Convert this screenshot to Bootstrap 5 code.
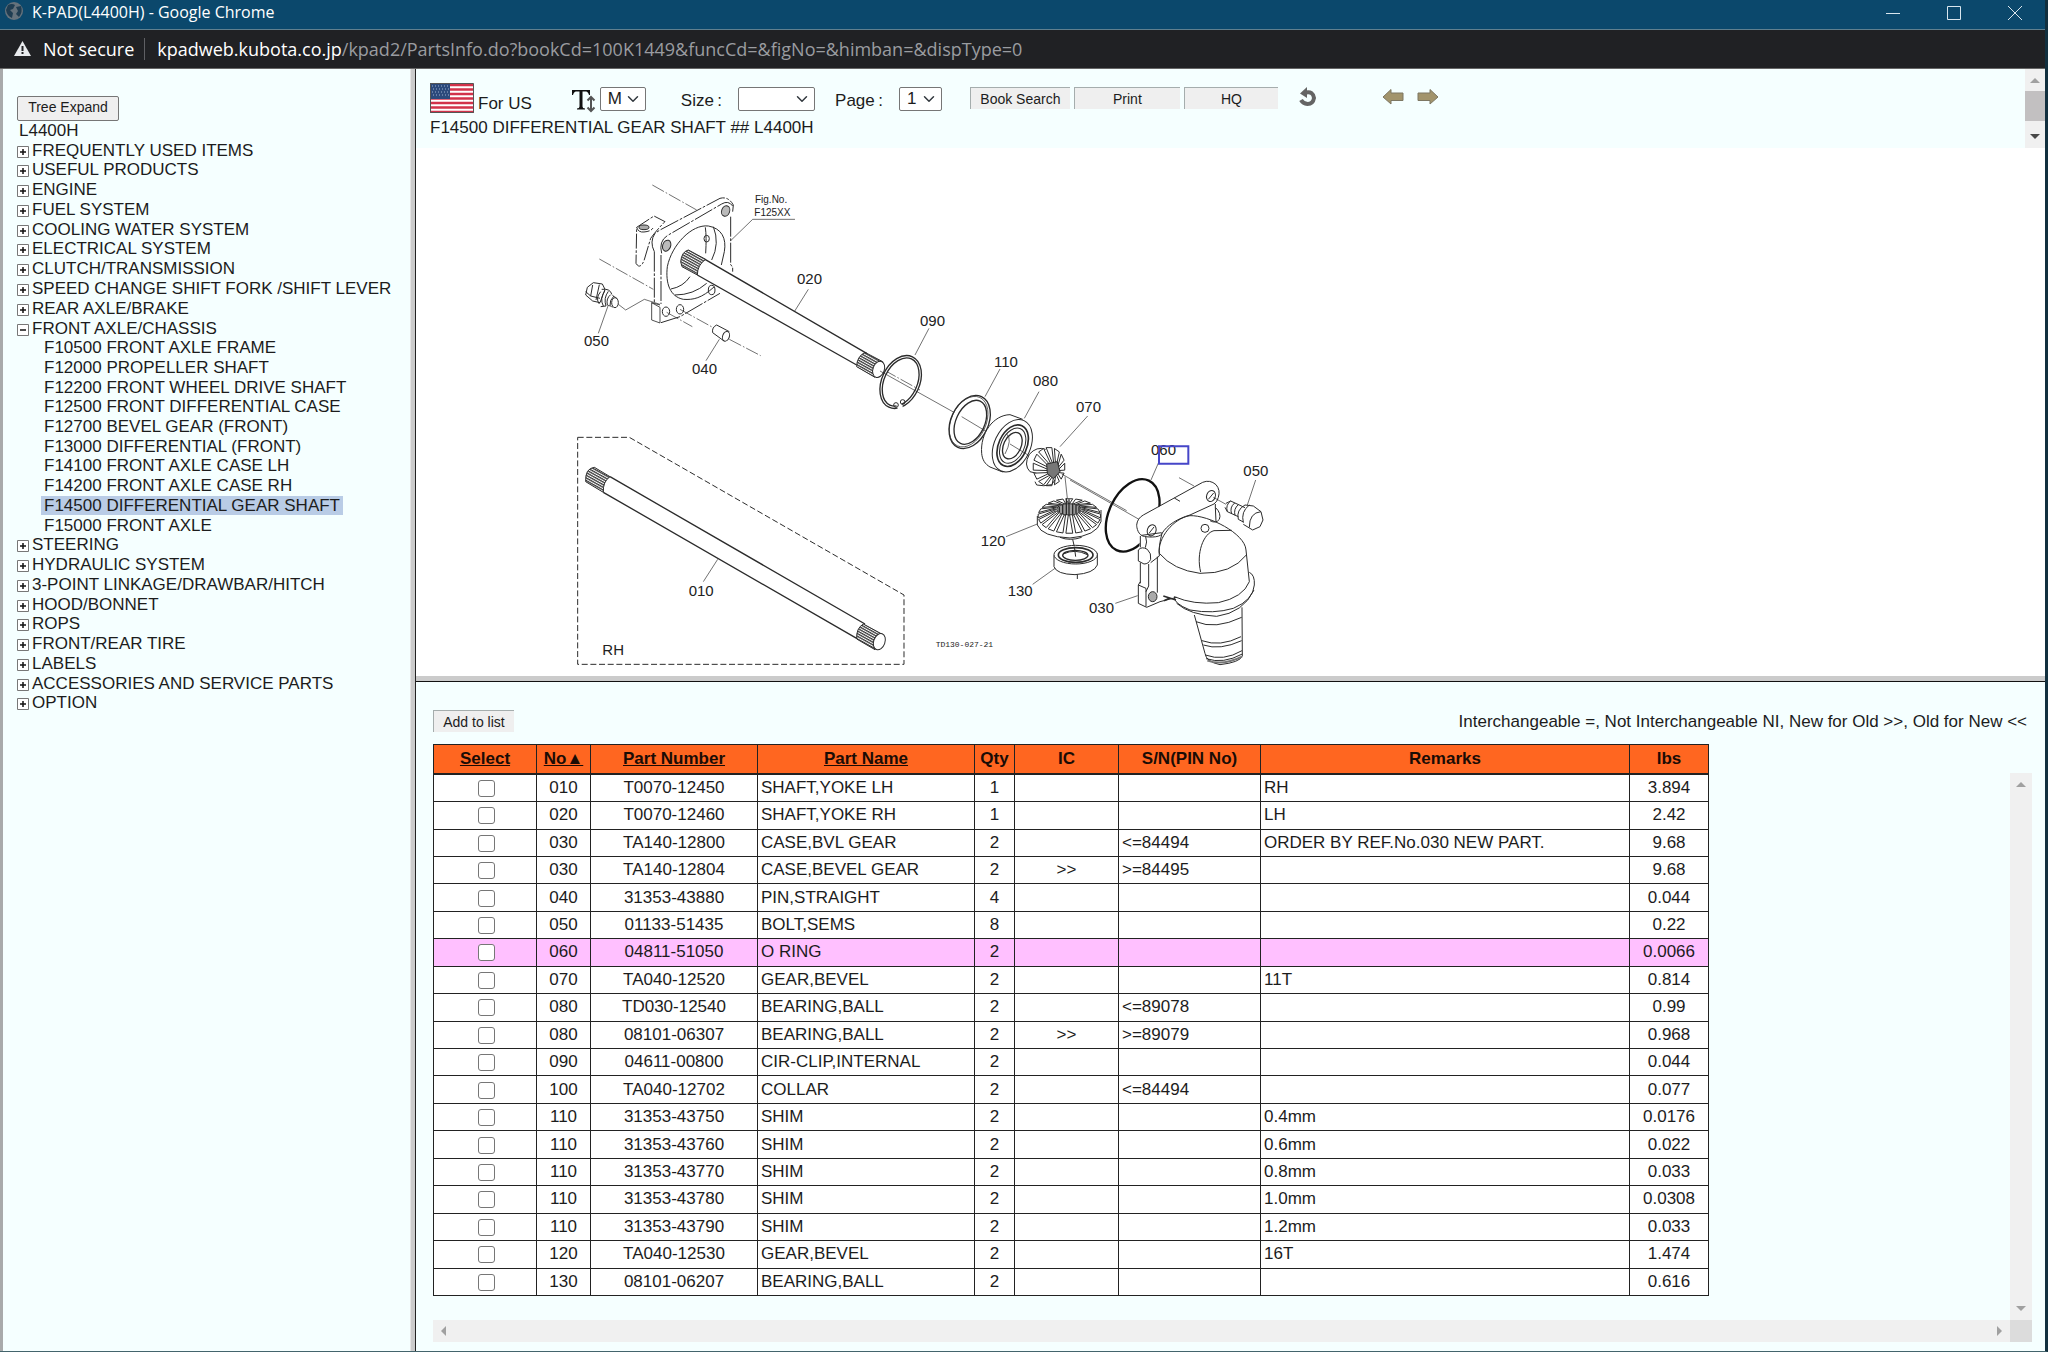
<!DOCTYPE html>
<html lang="en">
<head>
<meta charset="utf-8">
<meta name="viewport" content="width=device-width, initial-scale=1">
<title>K-PAD(L4400H)</title>
<link rel="stylesheet" href="https://cdn.jsdelivr.net/npm/bootstrap@5.3.0/dist/css/bootstrap.min.css">
<script src="https://cdn.jsdelivr.net/npm/bootstrap@5.3.0/dist/js/bootstrap.bundle.min.js"></script>
<style>
body{font-family:"Liberation Sans",Arial,sans-serif;font-size:17px;line-height:20px;color:#1c1c1c;background:#f5ffff;border-right:3px solid #12303f;border-bottom:1px solid #43646c}
.titlebar{height:30px;background:#0b486c;border-bottom:1px solid #60808f;color:#fff;font:16px/24px "Open Sans","Noto Sans",sans-serif;padding-left:4px}
.winbtn{width:61px;height:26px;padding:0;border:0;background:none;line-height:0}
.addressbar{height:39px;background:#202124;border-bottom:1px solid #666;color:#fff;font:18px/36px "Open Sans","Noto Sans",sans-serif;padding-left:14px}
.addressbar .urlhost{color:#fff;text-decoration:none}
.addressbar .urlpath{color:#9a9ca0}
.addressbar .notsecure{margin:0 10px 0 12px}
.vbar{width:1px;height:22px;background:#5f6064;margin-right:12px}
.treepane{width:410px;border-left:3px solid #a8aaab;padding:27px 0 0 14px}
.splitter{width:6px;background:#cbcbcb;border-right:1px solid #222;border-left:1px solid #e4e4e4}
.hsplitter{height:6px;background:#cbcbcb;border-bottom:1px solid #111}
.keybtn{font-size:14px;line-height:20px;padding:0 0 3px;color:#1c1c1c;background:#efefef;border:1px solid #767676;border-radius:2px;width:102px;height:25px}
.flatbtn{font-size:14px;line-height:20px;height:22px;padding:0;color:#1c1c1c;background:#efefef;border:0;border-top:1px solid #a5adad;border-left:1px solid #a5adad}
.tree{display:grid;grid-auto-rows:1fr;height:592px;padding:0;margin:0;list-style:none;justify-items:start}
.tree ul,.tree .branch{display:contents;list-style:none}
.tree a{color:#1c1c1c;text-decoration:none;white-space:nowrap;display:flex;align-items:center;line-height:19px}
.tree svg{width:12px;height:12px;margin:3px 3px 0 0}
.tree .leaf{margin-left:24px;padding:0 3px}
.tree .rootitem{padding-left:2px}
.tree .chosen{background:#b9cce6}
.toolbar{height:79px;padding-left:14px}
.toolrow{height:46px;padding-top:14px}
.toolrow .form-select{font-size:17px;line-height:20px;height:24px;padding:0 0 0 7px;border:1px solid #767676;border-radius:2px;background-color:#fff;background-position:right 5px center;background-size:14px 12px;color:#1c1c1c}
.w-m{width:46px}.w-size{width:77px}.w-page{width:43px}
.scrollgutter{width:20px;background:#f0f0f0}
.thumbpart{height:30px;background:#c2c0c1}
.canvas{background:#fff;height:528px}
.lowerpane{padding:28px 13px 9px 17px}
.listhead{height:34px}
.listhead .legendtext{padding:2px 5px 0 0}
.parts{width:1275px;height:552px;table-layout:fixed;border-collapse:collapse;background:#fff}
.parts th,.parts td{border:1px solid #222;padding:0 2px;line-height:20px;text-align:center;white-space:nowrap}
.parts th{background:#ff6620;height:29px;border-bottom-width:2px}
.parts th,.parts th a{color:#1a0c05}
.parts td:nth-child(4),.parts td:nth-child(7),.parts td:nth-child(8){text-align:left;padding-left:3px}
.parts .picked td{background:#ffc0ff}
.parts input{appearance:none;display:block;width:17px;height:17px;margin:1px auto 0;border:1px solid #767676;border-radius:3px;background:#fff}
.parts td:first-child{padding-left:4px}
.track{background:#f0f0f0}
.vtrack{width:22px;margin-top:29px}
.htrack{height:22px}
.corner{width:22px;background:#dcdcdc}
.textsize{margin:3px 1px 0 39px}
.gapbig{margin-left:35px}
.gapmid{margin-left:20px}
.gapsel{margin-left:16px}
.actions{margin-left:28px;gap:4px}
.b1{width:100px}.b2{width:106px}.b3{width:94px}.b4{width:81px}
.reloadlink{margin-left:20px}
.prevlink{margin-left:64px}
.nextlink{margin-left:13px}
.prevlink,.nextlink{padding-top:1px}
.flagtext{margin:11px 0 0 4px}
.figtitle{padding-top:3px}
svg{flex-shrink:0}
.drawing text{font-family:"Liberation Sans",Arial,sans-serif;font-size:45px;fill:#222;stroke:none}
.drawing .tiny{font-size:30px}
.drawing .mono{font-family:"Liberation Mono",monospace;font-size:24px}
</style>
</head>
<body class="vh-100 d-flex flex-column overflow-hidden">
<header>
<div class="titlebar d-flex align-items-start">
<svg width="20" height="24" viewBox="0 0 20 24" class="me-2"><circle cx="10" cy="11" r="9" fill="#65727c"/><path d="M4 5Q8 3 11 5L9 9 6 10 9 13 8 18Q3 16 2 10ZM12 7 17 6Q19 12 15 17L12 14 14 11Z" fill="#1f3d52"/></svg>
<span>K-PAD(L4400H) - Google Chrome</span>
<div class="ms-auto d-flex">
<button class="winbtn" aria-label="Minimize"><svg width="16" height="16" stroke="#d9e6ee" fill="none"><path d="M1 8.500H15"/></svg></button>
<button class="winbtn" aria-label="Maximize"><svg width="16" height="16" stroke="#d9e6ee" fill="none"><path d="M1.500 1.500H14.500V14.500H1.500Z"/></svg></button>
<button class="winbtn" aria-label="Close"><svg width="16" height="16" stroke="#d9e6ee" fill="none"><path d="M1 1 15 15M15 1 1 15"/></svg></button>
</div>
</div>
<div class="addressbar d-flex align-items-center">
<svg width="17" height="16" viewBox="0 0 17 16"><path d="M8.500 0 17 15H0Z" fill="#e8eaed"/><path d="M8.500 5V10M8.500 11V13" stroke="#202124" stroke-width="2"/></svg>
<span class="notsecure">Not secure</span><span class="vbar"></span>
<a class="urlhost" href="#">kpadweb.kubota.co.jp<span class="urlpath">/kpad2/PartsInfo.do?bookCd=100K1449&amp;funcCd=&amp;figNo=&amp;himban=&amp;dispType=0</span></a>
</div>
</header>

<svg width="0" height="0" class="position-absolute"><defs>
<symbol id="plus" viewBox="0 0 12 12"><path d="M.5.5H11.500V11.500H.5Z" fill="#fff" stroke="#777"/><path d="M3 6H9M6 3V9" stroke="#111" stroke-width="1.500"/></symbol>
<symbol id="minus" viewBox="0 0 12 12"><path d="M.5.5H11.500V11.500H.5Z" fill="#fff" stroke="#777"/><path d="M3 6H9" stroke="#111" stroke-width="1.500"/></symbol>
</defs></svg>

<main class="flex-fill d-flex">
<nav class="treepane flex-shrink-0">
<button class="keybtn d-block">Tree Expand</button>
<ul class="tree">
<li><a href="#" class="rootitem">L4400H</a></li>
<li><a href="#"><svg><use href="#plus"/></svg>FREQUENTLY USED ITEMS</a></li>
<li><a href="#"><svg><use href="#plus"/></svg>USEFUL PRODUCTS</a></li>
<li><a href="#"><svg><use href="#plus"/></svg>ENGINE</a></li>
<li><a href="#"><svg><use href="#plus"/></svg>FUEL SYSTEM</a></li>
<li><a href="#"><svg><use href="#plus"/></svg>COOLING WATER SYSTEM</a></li>
<li><a href="#"><svg><use href="#plus"/></svg>ELECTRICAL SYSTEM</a></li>
<li><a href="#"><svg><use href="#plus"/></svg>CLUTCH/TRANSMISSION</a></li>
<li><a href="#"><svg><use href="#plus"/></svg>SPEED CHANGE SHIFT FORK /SHIFT LEVER</a></li>
<li><a href="#"><svg><use href="#plus"/></svg>REAR AXLE/BRAKE</a></li>
<li class="branch"><a href="#"><svg><use href="#minus"/></svg>FRONT AXLE/CHASSIS</a>
<ul>
<li><a href="#" class="leaf">F10500 FRONT AXLE FRAME</a></li>
<li><a href="#" class="leaf">F12000 PROPELLER SHAFT</a></li>
<li><a href="#" class="leaf">F12200 FRONT WHEEL DRIVE SHAFT</a></li>
<li><a href="#" class="leaf">F12500 FRONT DIFFERENTIAL CASE</a></li>
<li><a href="#" class="leaf">F12700 BEVEL GEAR (FRONT)</a></li>
<li><a href="#" class="leaf">F13000 DIFFERENTIAL (FRONT)</a></li>
<li><a href="#" class="leaf">F14100 FRONT AXLE CASE LH</a></li>
<li><a href="#" class="leaf">F14200 FRONT AXLE CASE RH</a></li>
<li><a href="#" class="leaf chosen">F14500 DIFFERENTIAL GEAR SHAFT</a></li>
<li><a href="#" class="leaf">F15000 FRONT AXLE</a></li>
</ul></li>
<li><a href="#"><svg><use href="#plus"/></svg>STEERING</a></li>
<li><a href="#"><svg><use href="#plus"/></svg>HYDRAULIC SYSTEM</a></li>
<li><a href="#"><svg><use href="#plus"/></svg>3-POINT LINKAGE/DRAWBAR/HITCH</a></li>
<li><a href="#"><svg><use href="#plus"/></svg>HOOD/BONNET</a></li>
<li><a href="#"><svg><use href="#plus"/></svg>ROPS</a></li>
<li><a href="#"><svg><use href="#plus"/></svg>FRONT/REAR TIRE</a></li>
<li><a href="#"><svg><use href="#plus"/></svg>LABELS</a></li>
<li><a href="#"><svg><use href="#plus"/></svg>ACCESSORIES AND SERVICE PARTS</a></li>
<li><a href="#"><svg><use href="#plus"/></svg>OPTION</a></li>
</ul>
</nav>
<div class="splitter flex-shrink-0"></div>

<div class="flex-fill d-flex flex-column">
<div class="d-flex">
<div class="toolbar flex-fill">
<div class="toolrow d-flex align-items-start">
<svg width="44" height="30" viewBox="0 0 44 30"><path fill="#fff" d="M0 0H44V30H0Z"/><path d="M0 2H44M0 6.500H44M0 11H44M0 15.500H44M0 20H44M0 24.500H44M0 29H44" stroke="#d2324a" stroke-width="2.400"/><path fill="#2c4a7c" d="M0 0H20V16H0Z"/><path d="M2 3H19M3 6H19M2 9H19M3 12H19" stroke="#9fb2cf" stroke-dasharray="1 2"/><path d="M.5.5H43.500V29.500H.5Z" fill="none" stroke="#555" stroke-width="1"/></svg>
<span class="flagtext">For US</span>
<label for="fs" class="textsize"><svg width="28" height="28" viewBox="0 0 28 28" class="d-block"><path d="M1 4H19V9H18Q17 5.500 15 5.500H11.500V20.500Q11.500 22.500 14 22.500V23.500H6V22.500Q8.500 22.500 8.500 20.500V5.500H5Q3 5.500 2 9H1Z" fill="#111"/><path d="M20 12V24M16.500 14.500 20 11 23.500 14.500M16.500 21.500 20 25 23.500 21.500" fill="none" stroke="#555" stroke-width="2"/></svg></label>
<select id="fs" class="form-select w-m mt-1" aria-label="Text size"><option>M</option></select>
<label for="sz" class="mt-2 gapbig">Size&thinsp;:</label>
<select id="sz" class="form-select w-size mt-1 gapsel"><option></option></select>
<label for="pg" class="mt-2 gapmid">Page&thinsp;:</label>
<select id="pg" class="form-select w-page mt-1 gapsel"><option>1</option></select>
<div class="d-flex mt-1 actions">
<button class="flatbtn b1">Book Search</button><button class="flatbtn b2">Print</button><button class="flatbtn b3">HQ</button>
</div>
<a href="#" class="mt-1 reloadlink" aria-label="Reload"><svg width="20" height="20" viewBox="0 0 20 20" class="d-block"><path d="M8 5.500Q15 4 16 11 15 17 9.500 17 5 16.500 3 13" fill="none" stroke="#646464" stroke-width="4"/><path d="M2 6.500 9 0V11Z" fill="#646464"/></svg></a>
<a href="#" class="mt-1 prevlink" aria-label="Previous"><svg width="22" height="18" viewBox="0 0 22 18" class="d-block"><path d="M1 9 9 1.500V5H21V12.500H9V16Z" fill="#a2946c" stroke="#7d7763"/></svg></a>
<a href="#" class="mt-1 nextlink" aria-label="Next"><svg width="22" height="18" viewBox="0 0 22 18" class="d-block"><path d="M21 9 13 1.500V5H1V12.500H13V16Z" fill="#a2946c" stroke="#7d7763"/></svg></a>
</div>
<div class="figtitle">F14500 DIFFERENTIAL GEAR SHAFT ## L4400H</div>
</div>
<div class="scrollgutter d-flex flex-column">
<svg width="20" height="22"><path d="M5 14 10 9 15 14Z" fill="#a0a0a0"/></svg>
<div class="thumbpart"></div>
<svg width="20" height="27"><path d="M5 13 10 18 15 13Z" fill="#484848"/></svg>
</div>
</div>

<div class="canvas">
<svg class="drawing d-block" width="900" height="528" viewBox="416 148 900 528" fill="none" stroke="#2b2b2b" stroke-width="3" stroke-linejoin="round" role="img" aria-label="Differential gear shaft exploded view">
<defs><pattern id="spline" width="8" height="7" patternUnits="userSpaceOnUse" patternTransform="rotate(29)"><path d="M0 2H8" stroke="#222" stroke-width="3.500"/></pattern></defs>
<!-- flange, shaft 020, bolt 050 and pin 040 -->
<g transform="translate(560 170) scale(.33333)">
<path d="M277 45 410 120M118 267 280 358M360 418 458 472M320 427 397 470M508 508 602 557M972 600 1080 660" stroke-width="2" stroke-dasharray="40 6 5 6"/>
<path d="M230 172 282 138 315 155Q290 180 272 205L252 272Q240 300 228 280ZM230 172Q235 188 252 186 275 184 280 172" stroke-width="3" stroke-dasharray="45 5 8 5"/><ellipse cx="252" cy="172" rx="15" ry="7" fill="#aaa"/>
<path d="M283 245Q268 215 285 190L300 180 480 85Q505 78 520 105L518 125M305 250Q295 212 325 195L485 102Q505 90 518 108M283 245V400M303 255V402M512 140V285L518 290V305M303 458 360 440 480 370" stroke-width="3" stroke-dasharray="60 5 8 5"/>
<path d="M275 398V450L300 459V412ZM275 398 300 405" stroke-width="2.500"/>
<path d="M463 350C425 385 400 390 370 388 330 380 316 340 322 290 335 225 395 162 445 168 485 175 500 205 493 245L484 285M460 170Q480 220 455 270M333 357Q370 350 390 320M345 375Q400 375 440 340M436 172Q440 200 437 250"/>
<ellipse cx="320" cy="227" rx="12" ry="17" transform="rotate(20 320 227)" fill="#bbb"/><ellipse cx="497" cy="123" rx="12" ry="16" transform="rotate(20 497 123)" fill="#bbb"/>
<ellipse cx="318" cy="425" rx="11" ry="14"/><ellipse cx="360" cy="418" rx="11" ry="14"/><ellipse cx="455" cy="360" rx="10" ry="14"/><ellipse cx="440" cy="206" rx="8" ry="10"/>
<path d="M435 268 925 550 945 620 890 585 412 315Z" fill="#fff" stroke="none"/>
<path d="M362 275Q365 245 385 240L437 268Q412 285 412 315L366 290Z" fill="url(#spline)"/><path d="M435 268 920 550M412 315 890 585" stroke-width="4"/>
<path d="M915 547 968 575 945 622 890 590Q890 560 915 547Z" fill="url(#spline)"/><ellipse cx="956" cy="598" rx="17" ry="25" transform="rotate(20 956 598)" fill="#fff"/>
<path d="M82 352 100 338 127 342 135 358 120 398 98 393 77 375ZM98 345 92 378M118 344 108 390M77 365 92 378 120 385M125 358Q150 355 155 372M122 365Q105 385 118 402M135 362Q118 385 130 408M145 364Q130 385 138 408L122 410M152 374Q138 385 142 405M162 378Q148 390 150 408"/>
<ellipse cx="165" cy="398" rx="10" ry="15" fill="#fff"/><path d="M155 374 172 386M142 405 160 412M175 403 197 420 253 388 300 403" stroke-width="2"/>
<path d="M470 465 508 485M458 488 492 513M470 465Q455 472 458 488"/><ellipse cx="498" cy="499" rx="10" ry="15" transform="rotate(20 498 499)"/>
<path d="M145 405 115 490M478 508 438 572M745 358 703 425M705 148H578L512 212" stroke-width="2"/>
<text x="72" y="527">050</text><text x="396" y="613">040</text><text x="711" y="343">020</text><text x="585" y="100" class="tiny">Fig.No.</text><text x="583" y="138" class="tiny">F125XX</text>
</g>
<!-- snap ring 090, shim 110, bearing 080, pinion 070 -->
<g transform="translate(840 290) scale(.33333)">
<g transform="rotate(25 182 276)"><ellipse cx="182" cy="276" rx="53" ry="80" stroke-width="11"/><ellipse cx="182" cy="276" rx="53" ry="80" stroke="#fff" stroke-width="3"/></g>
<path d="M170 348 185 342" stroke="#fff" stroke-width="22"/><circle cx="168" cy="345" r="7"/><circle cx="188" cy="336" r="7"/>
<ellipse cx="389" cy="396" rx="56" ry="84" transform="rotate(25 389 396)" stroke-width="4"/><ellipse cx="391" cy="397" rx="43" ry="70" transform="rotate(25 391 397)" stroke-width="4"/><ellipse cx="386" cy="395" rx="52" ry="80" transform="rotate(25 386 395)" stroke-width="2"/>
<path d="M120 243 342 367M365 380 440 425" stroke-width="2"/>
<path d="M548 388 510 374C460 375 420 430 425 490 427 510 435 522 450 531L488 546" fill="#fff"/>
<ellipse cx="517" cy="467" rx="54" ry="83" transform="rotate(25 517 467)" fill="#fff"/><ellipse cx="518" cy="467" rx="42" ry="66" transform="rotate(25 518 467)" stroke-width="5"/><ellipse cx="518" cy="467" rx="35" ry="56" transform="rotate(25 518 467)"/><ellipse cx="517" cy="467" rx="26" ry="42" transform="rotate(25 517 467)" stroke-width="4"/><path d="M500 432Q518 448 495 492M510 462 572 500" stroke-width="2"/>
<path d="M617 478Q590 468 568 493 550 525 570 545L590 550" fill="#fff"/>
<g id="pinion"></g>
<path d="M620 522 652 515 660 545 640 566 622 550Z" fill="#777"/><path d="M585 575 590 585Q610 590 635 584L645 570"/>
<path d="M665 552 860 662M675 560 682 625M267 115 225 195M480 237 435 320M597 305 553 385M743 378 660 470" stroke-width="2"/>
<text x="240" y="107">090</text><text x="462" y="230">110</text><text x="579" y="287">080</text><text x="708" y="367">070</text>
</g>
<!-- gear 120, bearing 130, O-ring 060, case 030 -->
<g transform="translate(960 410) scale(.33333)">
<path d="M232 318V345Q245 380 330 384 410 378 423 335V300" fill="#fff"/>
<g id="ringgear"></g>
<ellipse cx="327" cy="298" rx="37" ry="17" fill="#999"/><path d="M298 290V306M308 285V312M319 265V315M327 268V315M338 282V313M348 285V310M357 290V305" stroke-width="4"/>
<path d="M300 382Q330 394 365 382M338 388 343 410M352 490V507"/>
<path d="M282 436V470Q290 493 345 494 402 490 412 465V430" fill="#fff"/><ellipse cx="347" cy="434" rx="65" ry="28" fill="#fff"/><ellipse cx="347" cy="435" rx="52" ry="22" stroke-width="5"/><ellipse cx="346" cy="436" rx="38" ry="15" stroke-width="4"/><path d="M310 432Q345 415 382 434M343 410 347 440"/>
<ellipse cx="518" cy="316" rx="71" ry="115" transform="rotate(25 518 316)" stroke="#111" stroke-width="7"/>
<path d="M330 210 537 328" stroke-width="2"/>
<!-- axle case -->
<path d="M540 375 548 318 730 215 775 250 775 310 770 335 860 420 884 520 865 575 847 600V738L780 764 740 750 703 612 645 575 592 572 560 592 533 580V525Z" fill="#fff" stroke="none"/>
<path d="M530 345Q532 325 550 315L728 217Q750 208 768 224 782 240 775 262 772 275 762 282L690 315C655 325 620 345 605 372 598 384 560 382 548 378 530 370 530 345 530 345ZM545 376 605 368M643 264 660 274"/>
<ellipse cx="575" cy="361" rx="13" ry="17" transform="rotate(20 575 361)"/><ellipse cx="753" cy="258" rx="13" ry="17" transform="rotate(20 753 258)"/><path d="M567 370 582 351M745 268 761 249"/>
<path d="M766 282V292Q785 310 778 328 768 342 750 332M766 292 768 335M541 378V412M557 380Q563 395 556 413M535 420Q545 408 562 418 575 430 572 448 566 462 552 462L535 453ZM606 370Q595 410 598 438L572 458M541 458V520M566 462V528L558 545M592 440V548M541 515 535 525V580L560 592 600 575 650 562M535 525 558 535V590"/>
<ellipse cx="578" cy="560" rx="13" ry="15" fill="#aaa"/><path d="M610 558 648 570M612 572 630 564" stroke-width="5"/>
<path d="M598 430C592 385 640 325 690 317 745 315 855 370 858 420M598 430Q640 480 720 490 815 492 860 434M858 420 868 515M722 486C708 430 730 370 762 362L815 361"/><circle cx="735" cy="355" r="12"/>
<path d="M643 560Q700 585 775 578 850 562 868 515M643 560Q640 580 690 600 760 613 820 595 880 570 883 525 885 495 868 487M650 580Q690 615 770 619 850 608 882 540"/>
<path d="M703 615 735 730Q738 755 780 764 840 757 847 738L846 592M708 635Q765 660 845 622M726 692Q780 712 843 680M730 705Q780 722 845 692M736 735Q790 755 846 722M738 746Q790 763 847 732"/><path d="M742 752Q790 768 846 740" stroke-width="6" stroke="#777"/>
<!-- bolt 050 -->
<path d="M657 203 702 228M760 262 798 283" stroke-width="2"/><path d="M798 280 812 273 855 293M795 292 802 305 835 320M812 273Q796 285 802 305M824 279Q808 292 815 312M835 284Q820 297 825 316M855 285Q828 300 835 328L850 336M868 285Q842 305 850 338M855 285 880 288 903 305 909 330 900 350 878 360 850 343M903 305Q868 308 868 352"/>
<path d="M597 155 573 210M887 210 862 285M138 380 232 342M218 523 285 475M466 580 533 557" stroke-width="2"/>
<text x="573" y="134">060</text><text x="850" y="198">050</text><text x="62" y="408">120</text><text x="143" y="557">130</text><text x="387" y="609">030</text>
<path d="M597 109H685V161H597Z" stroke="#4646c8" stroke-width="6" stroke-linejoin="miter"/>
</g>
<!-- RH shaft 010 -->
<g transform="translate(560 420) scale(.33333)">
<path d="M53 52H208L1032 525V733H53Z" stroke-dasharray="18 8"/>
<path d="M77 185Q75 145 103 142L150 170Q128 185 130 217Z" fill="url(#spline)"/><path d="M150 170 915 612M130 217 890 655" stroke-width="4"/><path d="M473 418 430 485" stroke-width="2"/>
<path d="M910 612 967 643 945 689 890 657Q888 625 910 612Z" fill="url(#spline)"/><ellipse cx="958" cy="665" rx="17" ry="25" transform="rotate(20 958 665)" fill="#fff"/>
<text x="386" y="527">010</text><text x="127" y="705">RH</text><text x="1127" y="680" class="mono">TD130-027-21</text>
</g>
</svg>
</div>
<div class="hsplitter"></div>

<section class="lowerpane flex-fill d-flex flex-column">
<div class="d-flex listhead">
<button class="flatbtn b4">Add to list</button>
<span class="ms-auto legendtext">Interchangeable =, Not Interchangeable NI, New for Old &gt;&gt;, Old for New &lt;&lt;</span>
</div>
<div class="d-flex flex-fill">
<div class="flex-fill">
<table class="parts">
<colgroup><col style="width:103px"><col style="width:54px"><col style="width:167px"><col style="width:217px"><col style="width:40px"><col style="width:104px"><col style="width:142px"><col style="width:369px"><col style="width:79px"></colgroup>
<thead><tr><th><a href="#">Select</a></th><th><a href="#">No▲</a></th><th><a href="#">Part Number</a></th><th><a href="#">Part Name</a></th><th>Qty</th><th>IC</th><th>S/N(PIN No)</th><th>Remarks</th><th>lbs</th></tr></thead>
<tbody>
<tr><td><input type="checkbox" aria-label="Select T0070-12450"></td><td>010</td><td>T0070-12450</td><td>SHAFT,YOKE LH</td><td>1</td><td></td><td></td><td>RH</td><td>3.894</td></tr>
<tr><td><input type="checkbox" aria-label="Select T0070-12460"></td><td>020</td><td>T0070-12460</td><td>SHAFT,YOKE RH</td><td>1</td><td></td><td></td><td>LH</td><td>2.42</td></tr>
<tr><td><input type="checkbox" aria-label="Select TA140-12800"></td><td>030</td><td>TA140-12800</td><td>CASE,BVL GEAR</td><td>2</td><td></td><td>&lt;=84494</td><td>ORDER BY REF.No.030 NEW PART.</td><td>9.68</td></tr>
<tr><td><input type="checkbox" aria-label="Select TA140-12804"></td><td>030</td><td>TA140-12804</td><td>CASE,BEVEL GEAR</td><td>2</td><td>&gt;&gt;</td><td>&gt;=84495</td><td></td><td>9.68</td></tr>
<tr><td><input type="checkbox" aria-label="Select 31353-43880"></td><td>040</td><td>31353-43880</td><td>PIN,STRAIGHT</td><td>4</td><td></td><td></td><td></td><td>0.044</td></tr>
<tr><td><input type="checkbox" aria-label="Select 01133-51435"></td><td>050</td><td>01133-51435</td><td>BOLT,SEMS</td><td>8</td><td></td><td></td><td></td><td>0.22</td></tr>
<tr class="picked"><td><input type="checkbox" aria-label="Select 04811-51050"></td><td>060</td><td>04811-51050</td><td>O RING</td><td>2</td><td></td><td></td><td></td><td>0.0066</td></tr>
<tr><td><input type="checkbox" aria-label="Select TA040-12520"></td><td>070</td><td>TA040-12520</td><td>GEAR,BEVEL</td><td>2</td><td></td><td></td><td>11T</td><td>0.814</td></tr>
<tr><td><input type="checkbox" aria-label="Select TD030-12540"></td><td>080</td><td>TD030-12540</td><td>BEARING,BALL</td><td>2</td><td></td><td>&lt;=89078</td><td></td><td>0.99</td></tr>
<tr><td><input type="checkbox" aria-label="Select 08101-06307"></td><td>080</td><td>08101-06307</td><td>BEARING,BALL</td><td>2</td><td>&gt;&gt;</td><td>&gt;=89079</td><td></td><td>0.968</td></tr>
<tr><td><input type="checkbox" aria-label="Select 04611-00800"></td><td>090</td><td>04611-00800</td><td>CIR-CLIP,INTERNAL</td><td>2</td><td></td><td></td><td></td><td>0.044</td></tr>
<tr><td><input type="checkbox" aria-label="Select TA040-12702"></td><td>100</td><td>TA040-12702</td><td>COLLAR</td><td>2</td><td></td><td>&lt;=84494</td><td></td><td>0.077</td></tr>
<tr><td><input type="checkbox" aria-label="Select 31353-43750"></td><td>110</td><td>31353-43750</td><td>SHIM</td><td>2</td><td></td><td></td><td>0.4mm</td><td>0.0176</td></tr>
<tr><td><input type="checkbox" aria-label="Select 31353-43760"></td><td>110</td><td>31353-43760</td><td>SHIM</td><td>2</td><td></td><td></td><td>0.6mm</td><td>0.022</td></tr>
<tr><td><input type="checkbox" aria-label="Select 31353-43770"></td><td>110</td><td>31353-43770</td><td>SHIM</td><td>2</td><td></td><td></td><td>0.8mm</td><td>0.033</td></tr>
<tr><td><input type="checkbox" aria-label="Select 31353-43780"></td><td>110</td><td>31353-43780</td><td>SHIM</td><td>2</td><td></td><td></td><td>1.0mm</td><td>0.0308</td></tr>
<tr><td><input type="checkbox" aria-label="Select 31353-43790"></td><td>110</td><td>31353-43790</td><td>SHIM</td><td>2</td><td></td><td></td><td>1.2mm</td><td>0.033</td></tr>
<tr><td><input type="checkbox" aria-label="Select TA040-12530"></td><td>120</td><td>TA040-12530</td><td>GEAR,BEVEL</td><td>2</td><td></td><td></td><td>16T</td><td>1.474</td></tr>
<tr><td><input type="checkbox" aria-label="Select 08101-06207"></td><td>130</td><td>08101-06207</td><td>BEARING,BALL</td><td>2</td><td></td><td></td><td></td><td>0.616</td></tr>
</tbody>
</table>
</div>
<div class="track vtrack d-flex flex-column justify-content-between">
<svg width="22" height="22"><path d="M6 14 11 9 16 14Z" fill="#a0a0a0"/></svg>
<svg width="22" height="22"><path d="M6 8 11 13 16 8Z" fill="#a0a0a0"/></svg>
</div>
</div>
<div class="d-flex htrack">
<div class="track flex-fill d-flex justify-content-between">
<svg width="22" height="22"><path d="M13 6 8 11 13 16Z" fill="#a0a0a0"/></svg>
<svg width="22" height="22"><path d="M9 6 14 11 9 16Z" fill="#a0a0a0"/></svg>
</div>
<div class="corner"></div>
</div>
</section>
</div>
</main>
<script>
// Draws bevel-gear teeth as tapered blades between an inner and an outer ellipse
function teeth(id, inner, outer, count, spread) {
  let d = "";
  const at = (e, a) => (e[0] + e[2] * Math.cos(a)).toFixed(1) + " " + (e[1] + e[3] * Math.sin(a)).toFixed(1);
  for (let i = 0; i < count; i++) {
    const a = i * 2 * Math.PI / count;
    d += `M${at(inner, a - spread / 2)} L${at(outer, a - spread)} L${at(outer, a + spread)} L${at(inner, a + spread / 2)}Z`;
  }
  const p = document.createElementNS("http://www.w3.org/2000/svg", "path");
  p.setAttribute("d", d);
  p.setAttribute("fill", "#fff");
  document.getElementById(id).append(p);
}
teeth("ringgear", [327, 298, 40, 18], [328, 318, 94, 52], 20, 0.11);
teeth("pinion", [640, 540, 16, 18], [627, 530, 48, 58], 12, 0.18);
</script>
</body>
</html>
